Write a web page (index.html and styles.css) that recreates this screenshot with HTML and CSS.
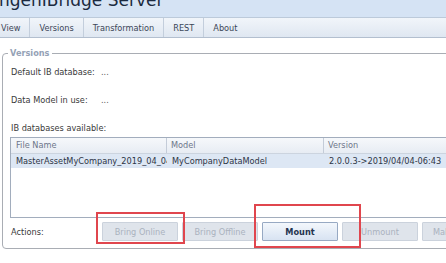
FILE: index.html
```html
<!DOCTYPE html>
<html>
<head>
<meta charset="utf-8">
<link rel="stylesheet" href="styles.css">
</head>
<body>
<div class="app">
  <header class="titlebar"><h1 class="title">IngenIBridge Server</h1></header>
  <nav class="tabs">
    <span class="tab">View</span>
    <span class="tab">Versions</span>
    <span class="tab">Transformation</span>
    <span class="tab">REST</span>
    <span class="tab">About</span>
  </nav>
  <main class="content">
    <fieldset class="group">
      <legend class="legend">Versions</legend>
      <div class="info first"><span class="label">Default IB database:</span><span class="value">...</span></div>
      <div class="info"><span class="label">Data Model in use:</span><span class="value">...</span></div>
      <div class="caption">IB databases available:</div>
      <div class="table">
        <div class="row head">
          <div class="cell c1">File Name</div>
          <div class="cell c2">Model</div>
          <div class="cell c3">Version</div>
        </div>
        <div class="row selected">
          <div class="cell c1">MasterAssetMyCompany_2019_04_04</div>
          <div class="cell c2">MyCompanyDataModel</div>
          <div class="cell c3">2.0.0.3-&gt;2019/04/04-06:43</div>
        </div>
      </div>
      <div class="actions">
        <span class="label">Actions:</span>
        <div class="buttons">
          <button class="btn" disabled>Bring Online</button>
          <button class="btn" disabled>Bring Offline</button>
          <button class="btn primary">Mount</button>
          <button class="btn" disabled>Unmount</button>
          <button class="btn" disabled>Make Default</button>
        </div>
      </div>
    </fieldset>
  </main>
  <div class="mark mark-online"></div>
  <div class="mark mark-mount"></div>
</div>
</body>
</html>
```

FILE: styles.css
```css
html, body {
  margin: 0;
  padding: 0;
  background: #ffffff;
}
.app {
  position: relative;
  width: 446px;
  height: 263px;
  overflow: hidden;
  font-family: "DejaVu Sans", Verdana, sans-serif;
  font-size: 8.2px;
  color: #3a3a3a;
}
.titlebar {
  height: 17px;
  background: #d5e3f4;
  overflow: hidden;
}
.title {
  margin: -8px 0 0 -6px;
  font-size: 17px;
  line-height: 17px;
  font-weight: normal;
  color: #1b2a40;
  white-space: nowrap;
}
.tabs {
  display: flex;
  height: 19px;
  margin-left: -8px;
  border-top: 1px solid #bccada;
  border-bottom: 1px solid #b3bfcf;
  background: linear-gradient(#f1f5fa, #dfe7f1);
}
.tab {
  display: flex;
  align-items: center;
  padding: 0 9px;
  border-right: 1px solid #c3cedc;
  color: #3c4658;
  white-space: nowrap;
}
.tab:last-child {
  border-right: none;
}
.content {
  padding: 10px 0 0 2px;
}
.group {
  width: 520px;
  height: 201px;
  box-sizing: border-box;
  margin: 0;
  padding: 0 0 0 8px;
  border: 1px solid #a9adb4;
  border-radius: 4px;
}
.legend {
  margin-left: -3px;
  padding: 0 2px;
  font-weight: bold;
  line-height: 10px;
  color: #95a2b6;
}
.info {
  display: grid;
  grid-template-columns: 90px auto;
  height: 10px;
  line-height: 10px;
  margin-top: 18px;
}
.info.first {
  margin-top: 9px;
}
.value {
  color: #5a5a5a;
}
.caption {
  margin-top: 18px;
  height: 10px;
  line-height: 10px;
}
.table {
  margin: 4px 0 0 -1px;
  height: 81px;
  box-sizing: border-box;
  border: 1px solid #a2adbd;
  background: #ffffff;
}
.row {
  display: grid;
  grid-template-columns: 156px 157px 1fr;
}
.cell {
  overflow: hidden;
  white-space: nowrap;
  padding-left: 5px;
}
.head {
  height: 15px;
  line-height: 15px;
  background: linear-gradient(#f6f8fb, #e7ecf3);
  border-bottom: 1px solid #ccd4df;
  color: #6d7689;
}
.head .cell {
  border-right: 1px solid #c4ccd8;
  padding-left: 4px;
}
.head .cell.c1 {
  padding-left: 5px;
}
.selected {
  height: 14px;
  line-height: 14px;
  background: #dde7f4;
  color: #2d3546;
}
.actions {
  display: grid;
  grid-template-columns: 91px auto;
  align-items: center;
  margin-top: 4px;
  height: 19px;
}
.buttons {
  display: flex;
  gap: 4px;
}
.btn {
  flex: none;
  width: 76px;
  height: 19px;
  margin: 0;
  padding: 0;
  font-family: "DejaVu Sans", Verdana, sans-serif;
  font-size: 8.2px;
  white-space: nowrap;
  overflow: hidden;
  border: 1px solid #cbd2dc;
  background: #dfe4eb;
  color: #aab2be;
  border-radius: 1px;
}
.btn.primary {
  border-color: #97a9c3;
  background: linear-gradient(#f3f7fc, #d8e3f2);
  color: #24344f;
  font-weight: bold;
}
.mark {
  position: absolute;
  box-sizing: border-box;
  border: 2px solid #e0464e;
}
.mark-online {
  left: 96px;
  top: 212px;
  width: 89px;
  height: 32px;
}
.mark-mount {
  left: 254px;
  top: 204px;
  width: 107px;
  height: 44px;
}
```
